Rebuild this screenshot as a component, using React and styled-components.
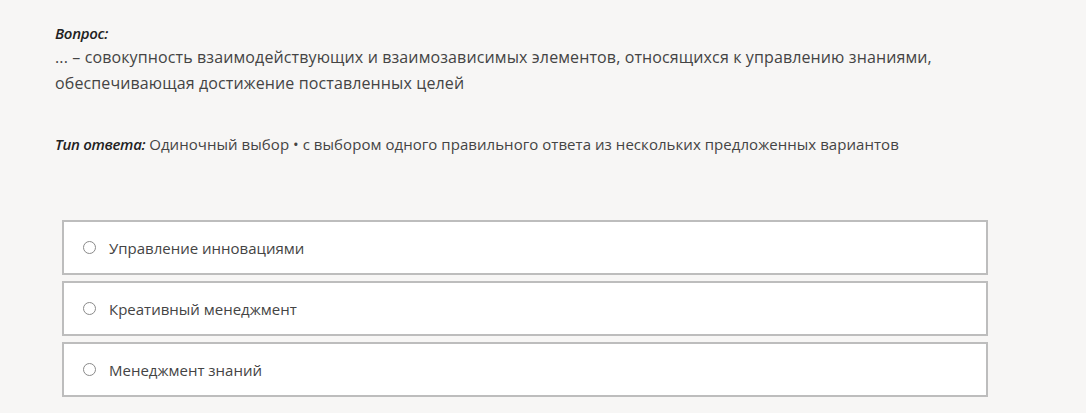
import React from "react";
import styled, { createGlobalStyle } from "styled-components";

const GlobalStyle = createGlobalStyle`
  html, body {
    margin: 0;
    background: #f7f6f5;
  }
  body {
    font-family: "Open Sans", "Noto Sans", sans-serif;
    color: #444;
  }
`;

const Page = styled.div`
  width: 933px;
  padding: 22px 0 0 55px;
`;

const Label = styled.div`
  font-style: italic;
  font-weight: 600;
  font-size: 15px;
  line-height: 22px;
  letter-spacing: -0.3px;
  color: #222;
`;

const Question = styled.p`
  margin: 0;
  font-size: 16px;
  line-height: 26px;
  letter-spacing: 0.12px;
  color: #444;
`;

const AnswerType = styled.p`
  margin: 37px 0 0;
  font-size: 15px;
  line-height: 22px;
  letter-spacing: 0.05px;
  color: #444;

  b {
    font-style: italic;
    font-weight: 600;
    letter-spacing: -0.3px;
    color: #222;
  }
`;

const Options = styled.div`
  display: flex;
  flex-direction: column;
  gap: 6px;
  margin: 65px 0 0 7px;
`;

const Option = styled.label`
  display: flex;
  align-items: center;
  gap: 13px;
  height: 55px;
  box-sizing: border-box;
  padding: 0 19px;
  background: #fff;
  border: 2px solid #bdbdbd;
  font-size: 15px;
  color: #444;
  cursor: pointer;
`;

const Radio = styled.span`
  width: 11px;
  height: 11px;
  border: 1.5px solid #8a8a8a;
  border-radius: 50%;
  flex-shrink: 0;
`;

const answers = [
  "Управление инновациями",
  "Креативный менеджмент",
  "Менеджмент знаний",
];

export default function App() {
  return (
    <>
      <GlobalStyle />
      <Page>
        <Label>Вопрос:</Label>
        <Question>
          ... – совокупность взаимодействующих и взаимозависимых элементов, относящихся к управлению знаниями,
          обеспечивающая достижение поставленных целей
        </Question>
        <AnswerType>
          <b>Тип ответа:</b> Одиночный выбор • с выбором одного правильного ответа из нескольких предложенных вариантов
        </AnswerType>
        <Options>
          {answers.map((a) => (
            <Option key={a}>
              <Radio />
              {a}
            </Option>
          ))}
        </Options>
      </Page>
    </>
  );
}
